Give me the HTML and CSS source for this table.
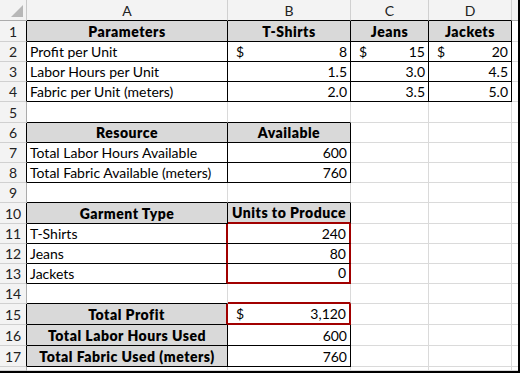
FILE: index.html
```html
<!DOCTYPE html>
<html>
<head>
<meta charset="utf-8">
<link rel="stylesheet" href="styles.css">
</head>
<body>
<div class="sheet">
  <!-- header row -->
  <div class="c corner"><svg class="tri" width="12" height="12" viewBox="0 0 12 12"><polygon points="12,0 12,12 0,12" fill="#b7b7b7"/></svg></div>
  <div class="c ch bb">A</div>
  <div class="c ch bb">B</div>
  <div class="c ch bb">C</div>
  <div class="c ch bb">D</div>
  <div class="c ch"></div>

  <!-- row 1 -->
  <div class="c rh br">1</div>
  <div class="c th br bb">Parameters</div>
  <div class="c th br bb">T-Shirts</div>
  <div class="c th br bb">Jeans</div>
  <div class="c th br bb">Jackets</div>
  <div class="c"></div>

  <!-- row 2 -->
  <div class="c rh br">2</div>
  <div class="c br bb">Profit per Unit</div>
  <div class="c acct br bb"><span>$</span><span>8</span></div>
  <div class="c acct br bb"><span>$</span><span>15</span></div>
  <div class="c acct br bb"><span>$</span><span>20</span></div>
  <div class="c"></div>

  <!-- row 3 -->
  <div class="c rh br">3</div>
  <div class="c br bb">Labor Hours per Unit</div>
  <div class="c num br bb">1.5</div>
  <div class="c num br bb">3.0</div>
  <div class="c num br bb">4.5</div>
  <div class="c"></div>

  <!-- row 4 -->
  <div class="c rh br">4</div>
  <div class="c br bb">Fabric per Unit (meters)</div>
  <div class="c num br bb">2.0</div>
  <div class="c num br bb">3.5</div>
  <div class="c num br bb">5.0</div>
  <div class="c"></div>

  <!-- row 5 -->
  <div class="c rh">5</div>
  <div class="c bb"></div>
  <div class="c bb"></div>
  <div class="c"></div>
  <div class="c"></div>
  <div class="c"></div>

  <!-- row 6 -->
  <div class="c rh br">6</div>
  <div class="c th br bb">Resource</div>
  <div class="c th br bb">Available</div>
  <div class="c"></div>
  <div class="c"></div>
  <div class="c"></div>

  <!-- row 7 -->
  <div class="c rh br">7</div>
  <div class="c br bb">Total Labor Hours Available</div>
  <div class="c num br bb">600</div>
  <div class="c"></div>
  <div class="c"></div>
  <div class="c"></div>

  <!-- row 8 -->
  <div class="c rh br">8</div>
  <div class="c br bb">Total Fabric Available (meters)</div>
  <div class="c num br bb">760</div>
  <div class="c"></div>
  <div class="c"></div>
  <div class="c"></div>

  <!-- row 9 -->
  <div class="c rh">9</div>
  <div class="c bb"></div>
  <div class="c bb"></div>
  <div class="c"></div>
  <div class="c"></div>
  <div class="c"></div>

  <!-- row 10 -->
  <div class="c rh br">10</div>
  <div class="c th br bb">Garment Type</div>
  <div class="c th br bbr">Units to Produce</div>
  <div class="c"></div>
  <div class="c"></div>
  <div class="c"></div>

  <!-- row 11 -->
  <div class="c rh br">11</div>
  <div class="c brr bb">T-Shirts</div>
  <div class="c num brr bb">240</div>
  <div class="c"></div>
  <div class="c"></div>
  <div class="c"></div>

  <!-- row 12 -->
  <div class="c rh br">12</div>
  <div class="c brr bb">Jeans</div>
  <div class="c num brr bb">80</div>
  <div class="c"></div>
  <div class="c"></div>
  <div class="c"></div>

  <!-- row 13 -->
  <div class="c rh br">13</div>
  <div class="c brr bb">Jackets</div>
  <div class="c num brr bbr">0</div>
  <div class="c"></div>
  <div class="c"></div>
  <div class="c"></div>

  <!-- row 14 -->
  <div class="c rh">14</div>
  <div class="c bb"></div>
  <div class="c bbr"></div>
  <div class="c"></div>
  <div class="c"></div>
  <div class="c"></div>

  <!-- row 15 -->
  <div class="c rh br">15</div>
  <div class="c th brr bb">Total Profit</div>
  <div class="c acct brr bbr"><span>$</span><span>3,120</span></div>
  <div class="c"></div>
  <div class="c"></div>
  <div class="c"></div>

  <!-- row 16 -->
  <div class="c rh br">16</div>
  <div class="c th br bb">Total Labor Hours Used</div>
  <div class="c num br bb">600</div>
  <div class="c"></div>
  <div class="c"></div>
  <div class="c"></div>

  <!-- row 17 -->
  <div class="c rh br">17</div>
  <div class="c th br bb">Total Fabric Used (meters)</div>
  <div class="c num br bb">760</div>
  <div class="c"></div>
  <div class="c"></div>
  <div class="c"></div>

  <!-- row 18 (partial) -->
  <div class="c rh"></div>
  <div class="c"></div>
  <div class="c"></div>
  <div class="c"></div>
  <div class="c"></div>
  <div class="c"></div>
</div>
</body>
</html>
```
FILE: styles.css
```css
html, body {
  margin: 0;
  padding: 0;
  background: #fff;
}

.sheet {
  width: 520px;
  height: 373px;
  box-sizing: border-box;
  border-right: 2px solid #000;
  border-bottom: 2px solid #000;
  display: grid;
  grid-template-columns: 27px 201px 123px 78px 83px 6px;
  grid-template-rows: 21px 21px 20px 20px 20px 21px 20px 20px 20px 20px 21px 20px 20px 20px 20px 21px 21px 21px 4px;
  overflow: hidden;
  font-family: Lato, "Liberation Sans", sans-serif;
  font-size: 14px;
  color: #000;
}

.c {
  box-sizing: border-box;
  border-right: 1px solid #dadada;
  border-bottom: 1px solid #dadada;
  display: flex;
  align-items: flex-end;
  padding: 0 3px 1px 3px;
  line-height: 16px;
  white-space: nowrap;
  overflow: hidden;
  min-width: 0;
}

.corner {
  background: #f3f3f3;
  border-right-color: #c8c8c8;
  border-bottom-color: #ababab;
  padding: 0;
  align-items: flex-end;
  justify-content: flex-end;
}

.tri {
  display: block;
  margin: 0 3px 3px 0;
}

.ch {
  background: #f3f3f3;
  justify-content: center;
  border-right-color: #d0d0d0;
  border-bottom-color: #ababab;
  color: #222;
}

.rh {
  background: #f3f3f3;
  justify-content: center;
  border-right-color: #ababab;
  border-bottom-color: #d0d0d0;
  padding: 0 0 1px 0;
  color: #222;
}

.th {
  background: #d9d9d9;
  font-weight: 800;
  letter-spacing: 0.5px;
  justify-content: center;
}

.num {
  justify-content: flex-end;
}

.acct {
  justify-content: space-between;
  padding-left: 8px;
}

.br { border-right: 1px solid #000; }
.bb { border-bottom: 1px solid #000; }
.brr { border-right: 2px solid #a10000; }
.bbr { border-bottom: 2px solid #a10000; }
```
